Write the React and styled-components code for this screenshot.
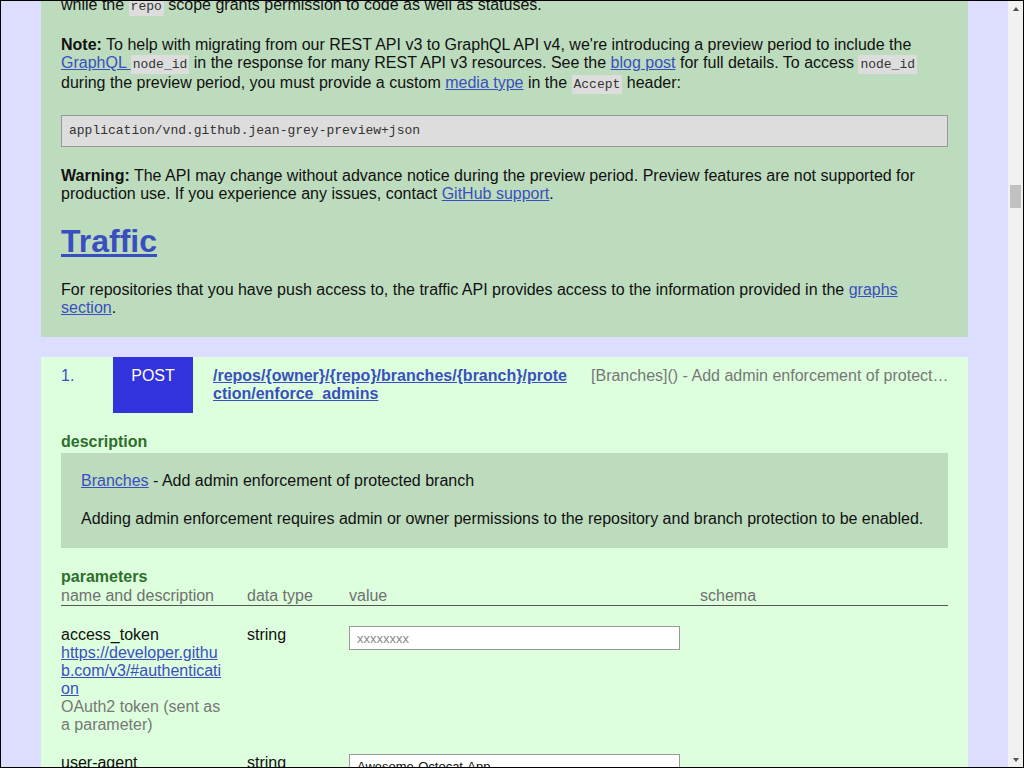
import React, { useLayoutEffect, useRef } from "react";
import styled, { createGlobalStyle } from "styled-components";

const LINK = "#3a4fbf";

const GlobalStyle = createGlobalStyle`
  html, body {
    margin: 0;
    height: 100%;
    overflow: hidden;
  }
  body {
    font-family: "Liberation Sans", Arial, sans-serif;
    font-size: 16px;
    color: #111;
  }
`;

const Frame = styled.div`
  display: flex;
  box-sizing: border-box;
  height: 768px;
  border: 1px solid #000;
`;

const Viewport = styled.div`
  position: relative;
  flex: 1;
  min-width: 0;
  overflow: hidden;
  background: #ddf;
`;

const ScrollBar = styled.div`
  width: 15px;
  flex: none;
  display: flex;
  flex-direction: column;
  background: #f1f1f1;
`;

const ScrollArrow = styled.div`
  height: 15px;
  display: flex;
  align-items: center;
  justify-content: center;
  &::before {
    content: "";
    border-left: 3.5px solid transparent;
    border-right: 3.5px solid transparent;
    ${(p) => (p.$down ? "border-top" : "border-bottom")}: 4px solid #505050;
  }
`;

const ScrollTrack = styled.div`
  flex: 1;
`;

const ScrollThumb = styled.div`
  margin: ${(p) => p.$top}px 2px 0;
  height: ${(p) => p.$size}px;
  background: #c1c1c1;
`;

const Panel = styled.section`
  display: flow-root;
  margin: 0 40px;
  padding: 0 20px;
  background: #bddcbd;
`;

const Paragraph = styled.p`
  margin: 20px 0;
`;

const Heading = styled.h1`
  font-size: 32px;
  font-weight: bold;
  margin: 20px 0 21px;
`;

const Link = styled.a`
  color: ${LINK};
  text-decoration: underline;
  cursor: pointer;
`;

const Code = styled.code`
  display: inline-block;
  font-family: "Liberation Mono", "DejaVu Sans Mono", monospace;
  font-size: 13px;
  background: #ddd;
  color: #333;
  padding: 2px;
`;

const CodeBlock = styled.pre`
  margin: 21px 0 20px;
  padding: 7px 7px 8px;
  border: 1px solid #999;
  background: #ddd;
  color: #333;
  font-family: "Liberation Mono", "DejaVu Sans Mono", monospace;
  font-size: 13px;
  white-space: pre-wrap;
`;

const EndpointList = styled.ol`
  list-style: none;
  margin: 20px 40px;
  padding: 0;
  display: flex;
  flex-direction: column;
  gap: 20px;
`;

const Endpoint = styled.li`
  display: flow-root;
  background: #dfd;
  padding: 0 20px 20px;
`;

const EndpointHead = styled.div`
  display: flex;
  align-items: stretch;
`;

const Num = styled.div`
  width: 52px;
  flex: none;
  padding-top: 10px;
  color: ${LINK};
`;

const Method = styled.div`
  width: 80px;
  flex: none;
  padding: 10px 0;
  text-align: center;
  color: #fff;
  background: ${(p) => p.$color};
`;

const PathLink = styled(Link)`
  width: 358px;
  flex: none;
  margin: 0 20px;
  padding: 10px 0;
  font-weight: bold;
  word-break: break-all;
`;

const Summary = styled.div`
  flex: 1;
  min-width: 0;
  margin-right: -3px;
  padding-top: 10px;
  color: #777;
  white-space: nowrap;
  overflow: hidden;
  text-overflow: ellipsis;
`;

const Label = styled.h3`
  margin: 20px 0 1px;
  font-size: 16px;
  font-weight: bold;
  color: #2e6e2e;
`;

const DescBox = styled.div`
  display: flow-root;
  margin-top: 2px;
  padding: 0 20px;
  background: #bddcbd;
  p {
    margin: 19px 0 20px;
  }
`;

const ParamGrid = styled.div`
  display: grid;
  grid-template-columns: 186px 102px 351px 1fr;
  padding-top: ${(p) => (p.$head ? "0" : "20px")};
  color: ${(p) => (p.$head ? "#707070" : "inherit")};
  border-bottom: ${(p) => (p.$head ? "1px solid #555" : "none")};
`;

const NameCell = styled.div`
  padding-right: 24px;
  word-break: break-all;
  display: flex;
  flex-direction: column;
`;

const Muted = styled.span`
  color: #777;
  word-break: normal;
`;

const Field = styled.input`
  box-sizing: border-box;
  width: 331px;
  height: 24px;
  margin: 0;
  padding: 0 7px;
  border: 1px solid #999;
  background: #fff;
  font-family: "Liberation Sans", Arial, sans-serif;
  font-size: 13px;
  color: #111;
  &::placeholder {
    color: #8a8a8a;
  }
`;

const METHOD_COLORS = {
  GET: "#2a8a2a",
  POST: "#33d",
  PUT: "#a050a0",
  PATCH: "#d08000",
  DELETE: "#c33",
};

const AUTH_PARAMS = [
  {
    name: "access_token",
    href: "https://developer.github.com/v3/#authentication",
    desc: "OAuth2 token (sent as a parameter)",
    placeholder: "xxxxxxxx",
  },
  {
    name: "user-agent",
    href: "https://developer.github.com/v3/#user-agent-required",
    desc: "All API requests MUST include a valid User-Agent header.",
    value: "Awesome-Octocat-App",
  },
];

function paramsFor(path) {
  const found = [...path.matchAll(/\{(\w+)\}/g)].map((m) => ({
    name: m[1],
    desc: "required",
    placeholder: "",
  }));
  return [...AUTH_PARAMS, ...found];
}

const BP = "/repos/{owner}/{repo}/branches/{branch}/protection";

const reactionEndpoints = [
  ["GET", "/repos/{owner}/{repo}/comments/{comment_id}/reactions", "List reactions for a commit comment"],
  ["POST", "/repos/{owner}/{repo}/comments/{comment_id}/reactions", "Create reaction for a commit comment"],
  ["GET", "/repos/{owner}/{repo}/issues/{number}/reactions", "List reactions for an issue"],
  ["POST", "/repos/{owner}/{repo}/issues/{number}/reactions", "Create reaction for an issue"],
  ["GET", "/repos/{owner}/{repo}/issues/comments/{comment_id}/reactions", "List reactions for an issue comment"],
  ["POST", "/repos/{owner}/{repo}/issues/comments/{comment_id}/reactions", "Create reaction for an issue comment"],
  ["GET", "/repos/{owner}/{repo}/pulls/comments/{comment_id}/reactions", "List reactions for a pull request review comment"],
  ["POST", "/repos/{owner}/{repo}/pulls/comments/{comment_id}/reactions", "Create reaction for a pull request review comment"],
  ["DELETE", "/reactions/{id}", "Delete a reaction"],
];

const branchEndpoints = [
  ["POST", BP + "/enforce_admins", "Add admin enforcement of protected branch", "Adding admin enforcement requires admin or owner permissions to the repository and branch protection to be enabled."],
  ["DELETE", BP + "/enforce_admins", "Remove admin enforcement of protected branch", "Removing admin enforcement requires admin or owner permissions to the repository and branch protection to be enabled."],
  ["GET", BP + "/enforce_admins", "Get admin enforcement of protected branch"],
  ["GET", BP + "/required_pull_request_reviews", "Get pull request review enforcement of protected branch"],
  ["PATCH", BP + "/required_pull_request_reviews", "Update pull request review enforcement of protected branch"],
  ["DELETE", BP + "/required_pull_request_reviews", "Remove pull request review enforcement of protected branch"],
  ["GET", BP + "/required_signatures", "Get required signatures of protected branch"],
  ["POST", BP + "/required_signatures", "Add required signatures of protected branch"],
  ["DELETE", BP + "/required_signatures", "Remove required signatures of protected branch"],
  ["GET", BP + "/required_status_checks", "Get required status checks of protected branch"],
  ["PATCH", BP + "/required_status_checks", "Update required status checks of protected branch"],
  ["DELETE", BP + "/required_status_checks", "Remove required status checks of protected branch"],
  ["GET", BP + "/restrictions", "Get restrictions of protected branch"],
  ["DELETE", BP + "/restrictions", "Remove restrictions of protected branch"],
];

const repoSections = [
  ["Repositories", "Repositories are the core of GitHub: this API lets you list, create, edit and delete the repositories you have access to, and read their topics, languages, tags and contributors."],
  ["Branches", "The Branches API lets you list branches, read a single branch and manage branch protection for repositories you administer."],
  ["Collaborators", "When authenticating as an organization owner of an organization-owned repository, all organization owners are included in the list of collaborators. Otherwise, only users with access to the repository are returned in the collaborators list."],
  ["Commits", "The Repo Commits API supports listing, viewing, and comparing commits in a repository."],
  ["Contents", "These API endpoints let you create, modify, and delete Base64 encoded content in a repository. To request the raw format or rendered HTML (when supported), use custom media types for repository contents."],
  ["Merging", "The Repo Merging API supports merging branches in a repository. This accomplishes essentially the same thing as merging one branch into another in a local repository and then pushing to GitHub."],
];

function EndpointItem({ index, method, path, tag, summary, detail }) {
  return (
    <Endpoint>
      <EndpointHead>
        <Num>{index}.</Num>
        <Method $color={METHOD_COLORS[method]}>{method}</Method>
        <PathLink>{path}</PathLink>
        <Summary>[{tag}]() - {summary}</Summary>
      </EndpointHead>
      <Label>description</Label>
      <DescBox>
        <p>
          <Link>{tag}</Link> - {summary}
        </p>
        {detail && <p>{detail}</p>}
      </DescBox>
      <Label>parameters</Label>
      <ParamGrid $head>
        <div>name and description</div>
        <div>data type</div>
        <div>value</div>
        <div>schema</div>
      </ParamGrid>
      {paramsFor(path).map((p) => (
        <ParamGrid key={p.name}>
          <NameCell>
            <span>{p.name}</span>
            {p.href && <Link>{p.href}</Link>}
            <Muted>{p.desc}</Muted>
          </NameCell>
          <div>string</div>
          <div>
            <Field placeholder={p.placeholder} defaultValue={p.value} />
          </div>
          <div />
        </ParamGrid>
      ))}
    </Endpoint>
  );
}

function Endpoints({ tag, items }) {
  return (
    <EndpointList>
      {items.map(([method, path, summary, detail], i) => (
        <EndpointItem
          key={method + path}
          index={i + 1}
          method={method}
          path={path}
          tag={tag}
          summary={summary}
          detail={detail}
        />
      ))}
    </EndpointList>
  );
}

export default function App() {
  const viewRef = useRef(null);
  const noteRef = useRef(null);

  useLayoutEffect(() => {
    if (viewRef.current && noteRef.current) {
      viewRef.current.scrollTop = noteRef.current.offsetTop - 35;
    }
  }, []);

  return (
    <>
      <GlobalStyle />
      <Frame>
        <Viewport ref={viewRef}>
          <Panel>
            <Heading>
              <Link>Reactions</Link>
            </Heading>
            <Paragraph>
              Reactions let people respond to issues, pull requests, issue comments and commit comments
              with a single emoji. The API lists and creates reactions for each of these resources.
            </Paragraph>
          </Panel>
          <Endpoints tag="Reactions" items={reactionEndpoints} />

          <Panel>
            {repoSections.map(([title, text]) => (
              <React.Fragment key={title}>
                <Heading>
                  <Link>{title}</Link>
                </Heading>
                <Paragraph>{text}</Paragraph>
              </React.Fragment>
            ))}
            <Heading>
              <Link>Statuses</Link>
            </Heading>
            <Paragraph>
              The Status API allows external services to mark commits with a success, failure, error, or
              pending state, which is then reflected in pull requests involving those commits.
            </Paragraph>
            <Paragraph>
              Statuses can also include an optional <Code>description</Code> and <Code>target_url</Code>,
              and we highly recommend providing them as they make statuses much more useful in the GitHub
              UI.
            </Paragraph>
            <Paragraph>
              Note that the <Code>repo:status</Code> OAuth scope grants targeted access to Statuses without
              also granting access to repository code, while the <Code>repo</Code> scope grants permission
              to code as well as statuses.
            </Paragraph>
            <Paragraph ref={noteRef}>
              <b>Note:</b> To help with migrating from our REST API v3 to GraphQL API v4, we're introducing
              a preview period to include the{" "}
              <Link>
                GraphQL <Code>node_id</Code>
              </Link>{" "}
              in the response for many REST API v3 resources. See the <Link>blog post</Link> for full
              details. To access <Code>node_id</Code> during the preview period, you must provide a custom{" "}
              <Link>media type</Link> in the <Code>Accept</Code> header:
            </Paragraph>
            <CodeBlock>application/vnd.github.jean-grey-preview+json</CodeBlock>
            <Paragraph>
              <b>Warning:</b> The API may change without advance notice during the preview period. Preview
              features are not supported for production use. If you experience any issues, contact{" "}
              <Link>GitHub support</Link>.
            </Paragraph>
            <Heading>
              <Link>Traffic</Link>
            </Heading>
            <Paragraph>
              For repositories that you have push access to, the traffic API provides access to the
              information provided in the <Link>graphs section</Link>.
            </Paragraph>
          </Panel>
          <Endpoints tag="Branches" items={branchEndpoints} />
        </Viewport>
        <ScrollBar>
          <ScrollArrow />
          <ScrollTrack>
            <ScrollThumb $top={169} $size={23} />
          </ScrollTrack>
          <ScrollArrow $down />
        </ScrollBar>
      </Frame>
    </>
  );
}
